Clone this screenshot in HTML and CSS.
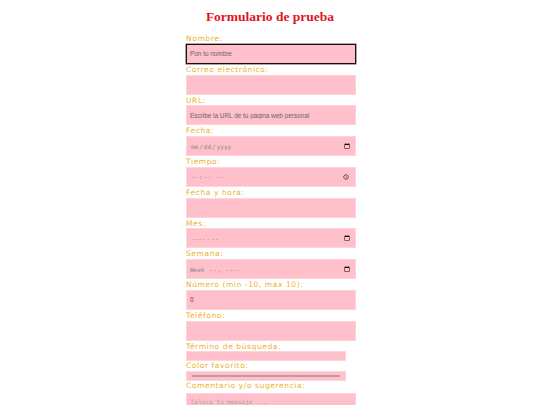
FILE: index.html
```html
<!DOCTYPE html>
<html lang="es">
<head>
<meta charset="utf-8">
<title>Formulario de prueba</title>
<link rel="stylesheet" href="styles.css">
</head>
<body>
<h1 class="title">Formulario de prueba</h1>
<form class="form">
  <label class="lbl" for="nombre">Nombre:</label>
  <input class="fld fld-focus" id="nombre" type="text" placeholder="Pon tu nombre">
  <label class="lbl" for="correo">Correo electrónico:</label>
  <input class="fld" id="correo" type="email">
  <label class="lbl" for="url">URL:</label>
  <input class="fld" id="url" type="url" placeholder="Escribe la URL de tu página web personal">
  <label class="lbl" for="fecha">Fecha:</label>
  <input class="fld mono" id="fecha" type="date">
  <label class="lbl" for="tiempo">Tiempo:</label>
  <input class="fld mono" id="tiempo" type="time">
  <label class="lbl" for="fh">Fecha y hora:</label>
  <input class="fld" id="fh" type="text">
  <label class="lbl" for="mes">Mes:</label>
  <input class="fld mono" id="mes" type="month">
  <label class="lbl" for="semana">Semana:</label>
  <input class="fld mono" id="semana" type="week">
  <label class="lbl" for="numero">Número (min -10, max 10):</label>
  <input class="fld" id="numero" type="number" min="-10" max="10" value="0">
  <label class="lbl" for="tel">Teléfono:</label>
  <input class="fld" id="tel" type="tel">
  <label class="lbl" for="buscar">Término de búsqueda:</label>
  <input class="fld fld-small" id="buscar" type="search">
  <label class="lbl" for="color">Color favorito:</label>
  <div class="fld fld-small color-box"><span class="color-bar"></span></div>
  <label class="lbl" for="coment">Comentario y/o sugerencia:</label>
  <textarea class="fld area" id="coment" placeholder="Coloca tu mensaje ..."></textarea>
</form>
</body>
</html>
```
FILE: styles.css
```css
html, body {
  margin: 0;
  padding: 0;
  background: #ffffff;
}
body {
  padding-top: 8px;
}
.title {
  margin: 0 0 8px 0;
  text-align: center;
  font-family: "Liberation Serif", serif;
  font-weight: bold;
  font-size: 13.5px;
  line-height: 18px;
  color: #e0141e;
}
.form {
  width: 170px;
  margin: 0 auto;
  display: flex;
  flex-direction: column;
  padding-left: 2px;
}
.lbl {
  display: block;
  font-family: "DejaVu Sans", Verdana, sans-serif;
  font-size: 7.5px;
  line-height: 10px;
  letter-spacing: 0.6px;
  color: #eeb030;
  height: 9.75px;
}
.fld {
  display: block;
  box-sizing: border-box;
  width: 170px;
  height: 20px;
  margin: 0 0 1px 0;
  padding: 0 3px;
  background: #ffc0cb;
  border: 1px solid #ffd3da;
  font-family: "Liberation Sans", Arial, sans-serif;
  font-size: 6.4px;
  color: #444;
  outline: none;
}
.fld::placeholder {
  color: #666;
}
.fld-focus {
  border: 1px solid #111;
  box-shadow: 0 0 0 0.5px #555;
}
.mono {
  font-family: "DejaVu Sans Mono", monospace;
  font-size: 6px;
  color: #888;
}
.fld-small {
  width: 160px;
  height: 10px;
  margin-bottom: 0;
}
.color-box {
  display: flex;
  align-items: center;
  padding: 0 5px;
}
.color-bar {
  display: block;
  width: 100%;
  height: 2px;
  background: #c49aa2;
}
.area {
  height: 20px;
  resize: none;
  padding: 4px 4px;
  font-family: "DejaVu Sans Mono", monospace;
  font-size: 6px;
  margin-top: 2px;
}
.area::placeholder {
  color: #a8a0a2;
}
```
